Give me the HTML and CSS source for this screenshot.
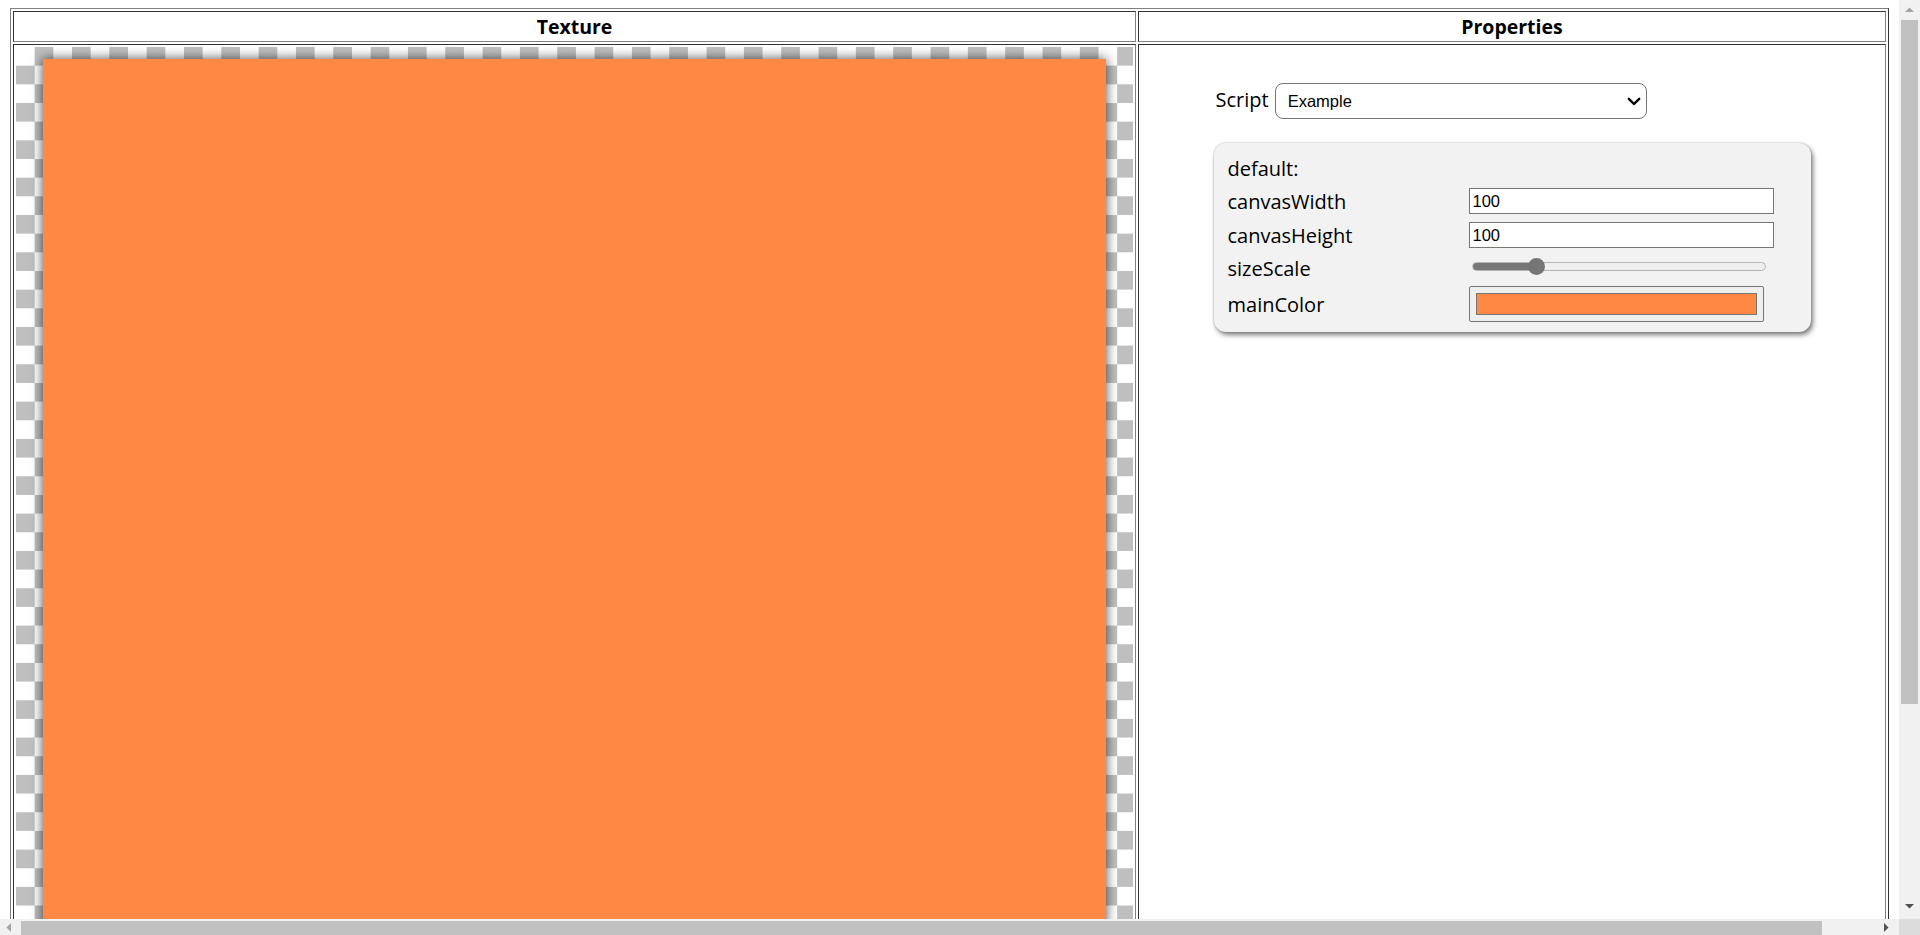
FILE: index.html
```html
<!DOCTYPE html>
<html lang="en">
<head>
<meta charset="utf-8">
<title>Texture Generator</title>
<link rel="stylesheet" href="styles.css">
</head>
<body>
<table class="layout">
  <tr>
    <th class="head head-texture">Texture</th>
    <th class="head head-props">Properties</th>
  </tr>
  <tr>
    <td class="cell texture-cell">
      <div class="checker">
        <div class="texture-canvas"></div>
      </div>
    </td>
    <td class="cell props-cell">
      <div class="props">
        <div class="script-row">
          <label class="script-label" for="script">Script</label>
          <div class="select-wrap">
            <select id="script" class="script-select">
              <option>Example</option>
            </select>
            <svg class="chevron" width="14" height="9" viewBox="0 0 14 9" aria-hidden="true">
              <path d="M1.8 1.8 L7 7 L12.2 1.8" fill="none" stroke="#000" stroke-width="2.4" stroke-linecap="round" stroke-linejoin="round"/>
            </svg>
          </div>
        </div>
        <div class="panel">
          <div class="panel-title">default:</div>
          <div class="field">
            <label class="field-label">canvasWidth</label>
            <input class="text-input" type="text" value="100">
          </div>
          <div class="field">
            <label class="field-label">canvasHeight</label>
            <input class="text-input" type="text" value="100">
          </div>
          <div class="field field-range">
            <label class="field-label">sizeScale</label>
            <input class="range-input" type="range" min="0" max="100" value="20" style="--fill: 21.7%">
          </div>
          <div class="field field-color">
            <label class="field-label">mainColor</label>
            <input class="color-input" type="color" value="#ff8844">
          </div>
        </div>
      </div>
    </td>
  </tr>
</table>

<div class="vscroll" aria-hidden="true">
  <div class="sb-btn sb-up">
    <svg width="9" height="5" viewBox="0 0 9 5"><polygon points="0,5 4.5,0.5 9,5" fill="#a3a3a3"/></svg>
  </div>
  <div class="vthumb"></div>
  <div class="sb-btn sb-down">
    <svg width="9" height="5" viewBox="0 0 9 5"><polygon points="0,0 9,0 4.5,4.5" fill="#505050"/></svg>
  </div>
</div>
<div class="hscroll" aria-hidden="true">
  <div class="sb-hbtn sb-left">
    <svg width="5" height="9" viewBox="0 0 5 9"><polygon points="5,0 5,9 0.5,4.5" fill="#a3a3a3"/></svg>
  </div>
  <div class="hthumb"></div>
  <div class="sb-hbtn sb-right">
    <svg width="5" height="9" viewBox="0 0 5 9"><polygon points="0,0 4.5,4.5 0,9" fill="#505050"/></svg>
  </div>
</div>
<div class="sb-corner" aria-hidden="true"></div>
</body>
</html>
```

FILE: styles.css
```css
html {
  background: #fff;
}

body {
  margin: 8px 10px;
  font-family: "Open Sans", "Noto Sans", sans-serif;
  font-size: 20px;
  color: #000;
}

/* layout table */
.layout {
  box-sizing: border-box;
  width: 1879px;
  table-layout: fixed;
  border-collapse: separate;
  border-spacing: 2px;
  border: 1px solid;
  border-color: #808080 #333 #333 #808080;
}

.head,
.cell {
  box-sizing: border-box;
  border: 1px solid;
  border-color: #333 #808080 #808080 #333;
}

.head {
  padding: 1px;
  font-size: 19.5px;
  font-weight: 700;
  line-height: 27px;
  text-align: center;
}

.head-texture {
  width: 1123px;
}

.head-props {
  width: 748px;
}

.cell {
  padding: 2px;
  vertical-align: top;
}

/* texture */
.checker {
  display: flow-root;
  background: repeating-conic-gradient(#bfbfbf 0 25%, #fff 0 50%) 0 0 / 37.33px 37.33px;
}

.texture-canvas {
  width: 1063px;
  height: 1092px;
  margin: 12px auto;
  background: #ff8844;
  box-shadow: 0 0 11px rgba(0, 0, 0, 0.7);
}

/* properties */
.props {
  width: 597px;
  margin: 0 auto;
  padding-top: 36px;
}

.script-row {
  display: flex;
  align-items: center;
  height: 36px;
  padding-left: 2px;
}

.script-label {
  line-height: 27px;
  margin-bottom: 4px;
}

.select-wrap {
  position: relative;
  margin-left: 6px;
}

.script-select {
  display: block;
  box-sizing: border-box;
  width: 372px;
  height: 36px;
  padding: 0 30px 0 12px;
  border: 1px solid #767676;
  border-radius: 8px;
  background: #fff;
  color: #000;
  font-family: "Liberation Sans", Arial, sans-serif;
  font-size: 16.5px;
  appearance: none;
  -webkit-appearance: none;
  outline: none;
}

.chevron {
  position: absolute;
  right: 6px;
  top: 14px;
  pointer-events: none;
}

.panel {
  box-sizing: border-box;
  width: 597px;
  margin-top: 24px;
  padding: 11px 0 10px 14px;
  background: #f2f2f2;
  border-radius: 12px;
  box-shadow: 0 0 2px rgba(0, 0, 0, 0.25), 2px 3px 5px rgba(0, 0, 0, 0.5);
}

.panel-title {
  height: 30px;
  line-height: 30px;
}

.field {
  display: grid;
  grid-template-columns: 241px auto;
  align-items: center;
  height: 34px;
}

.field-range {
  align-items: start;
  padding-top: 6px;
  box-sizing: border-box;
}

.field-range .field-label {
  margin-top: -6px;
  line-height: 34px;
}

.field-color {
  height: 36px;
}

.field-label {
  line-height: 27px;
}

.text-input {
  box-sizing: border-box;
  width: 305px;
  height: 26px;
  margin: 0;
  padding: 1px 3px;
  border: 1px solid #767676;
  border-radius: 0;
  background: #fff;
  font-family: "Liberation Sans", Arial, sans-serif;
  font-size: 16.5px;
  color: #000;
  outline: none;
}

.range-input {
  -webkit-appearance: none;
  appearance: none;
  width: 294px;
  height: 17px;
  margin: 0 0 0 3px;
  padding: 0;
  background: transparent;
}

.range-input::-webkit-slider-runnable-track {
  box-sizing: border-box;
  height: 9px;
  border: 1px solid #b5b5b5;
  border-radius: 5px;
  background: linear-gradient(to right, #767676 var(--fill), #efefef var(--fill));
}

.range-input::-webkit-slider-thumb {
  -webkit-appearance: none;
  width: 17px;
  height: 17px;
  margin-top: -5px;
  border: none;
  border-radius: 50%;
  background: #767676;
}

.color-input {
  box-sizing: border-box;
  width: 295px;
  height: 36px;
  margin: 0;
  padding: 1px 3px;
  border: 1px solid #767676;
  border-radius: 2px;
  background: #efefef;
  cursor: default;
}

.color-input::-webkit-color-swatch-wrapper {
  padding: 5px 3px;
}

.color-input::-webkit-color-swatch {
  border: 1px solid #777;
  border-radius: 0;
}

/* window scrollbars (drawn over the page) */
.vscroll {
  position: fixed;
  top: 0;
  right: 0;
  width: 21px;
  height: 919px;
  background: #f1f1f1;
  display: flex;
  flex-direction: column;
  align-items: center;
}

.sb-btn {
  width: 21px;
  height: 17px;
  display: flex;
  align-items: center;
  justify-content: center;
  flex: none;
}

.sb-up {
  padding-top: 1px;
}

.sb-down {
  margin-top: auto;
  margin-bottom: 4px;
}

.vthumb {
  width: 17px;
  height: 684px;
  margin-top: 2px;
  background: #c1c1c1;
}

.hscroll {
  position: fixed;
  left: 0;
  bottom: 0;
  width: 1899px;
  height: 16px;
  background: #f1f1f1;
  display: flex;
  align-items: flex-end;
}

.sb-hbtn {
  width: 17px;
  height: 16px;
  display: flex;
  align-items: center;
  justify-content: center;
  flex: none;
}

.hthumb {
  width: 1801px;
  height: 14px;
  margin-left: 4px;
  background: #c1c1c1;
}

.sb-right {
  margin-left: auto;
  margin-right: 4px;
}

.sb-corner {
  position: fixed;
  right: 0;
  bottom: 0;
  width: 21px;
  height: 16px;
  background: #dcdcdc;
}
```
